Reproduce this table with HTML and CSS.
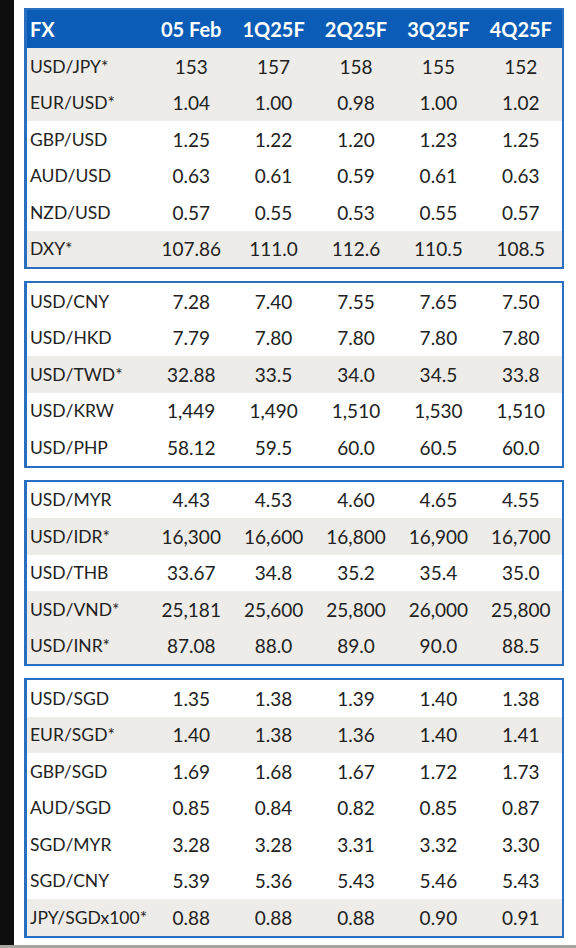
FILE: index.html
```html
<!DOCTYPE html>
<html lang="en">
<head>
<meta charset="utf-8">
<title>FX forecasts</title>
<link rel="stylesheet" href="styles.css">
</head>
<body>
<div class="screen">
  <div class="edge"></div>
  <main class="page">
    <section class="block">
      <div class="row head"><span class="pair">FX</span><span>05 Feb</span><span>1Q25F</span><span>2Q25F</span><span>3Q25F</span><span>4Q25F</span></div>
      <div class="row alt"><span class="pair">USD/JPY*</span><span>153</span><span>157</span><span>158</span><span>155</span><span>152</span></div>
      <div class="row alt"><span class="pair">EUR/USD*</span><span>1.04</span><span>1.00</span><span>0.98</span><span>1.00</span><span>1.02</span></div>
      <div class="row"><span class="pair">GBP/USD</span><span>1.25</span><span>1.22</span><span>1.20</span><span>1.23</span><span>1.25</span></div>
      <div class="row"><span class="pair">AUD/USD</span><span>0.63</span><span>0.61</span><span>0.59</span><span>0.61</span><span>0.63</span></div>
      <div class="row"><span class="pair">NZD/USD</span><span>0.57</span><span>0.55</span><span>0.53</span><span>0.55</span><span>0.57</span></div>
      <div class="row alt"><span class="pair">DXY*</span><span>107.86</span><span>111.0</span><span>112.6</span><span>110.5</span><span>108.5</span></div>
    </section>
    <section class="block">
      <div class="row"><span class="pair">USD/CNY</span><span>7.28</span><span>7.40</span><span>7.55</span><span>7.65</span><span>7.50</span></div>
      <div class="row"><span class="pair">USD/HKD</span><span>7.79</span><span>7.80</span><span>7.80</span><span>7.80</span><span>7.80</span></div>
      <div class="row alt"><span class="pair">USD/TWD*</span><span>32.88</span><span>33.5</span><span>34.0</span><span>34.5</span><span>33.8</span></div>
      <div class="row"><span class="pair">USD/KRW</span><span>1,449</span><span>1,490</span><span>1,510</span><span>1,530</span><span>1,510</span></div>
      <div class="row"><span class="pair">USD/PHP</span><span>58.12</span><span>59.5</span><span>60.0</span><span>60.5</span><span>60.0</span></div>
    </section>
    <section class="block">
      <div class="row"><span class="pair">USD/MYR</span><span>4.43</span><span>4.53</span><span>4.60</span><span>4.65</span><span>4.55</span></div>
      <div class="row alt"><span class="pair">USD/IDR*</span><span>16,300</span><span>16,600</span><span>16,800</span><span>16,900</span><span>16,700</span></div>
      <div class="row"><span class="pair">USD/THB</span><span>33.67</span><span>34.8</span><span>35.2</span><span>35.4</span><span>35.0</span></div>
      <div class="row alt"><span class="pair">USD/VND*</span><span>25,181</span><span>25,600</span><span>25,800</span><span>26,000</span><span>25,800</span></div>
      <div class="row alt"><span class="pair">USD/INR*</span><span>87.08</span><span>88.0</span><span>89.0</span><span>90.0</span><span>88.5</span></div>
    </section>
    <section class="block">
      <div class="row"><span class="pair">USD/SGD</span><span>1.35</span><span>1.38</span><span>1.39</span><span>1.40</span><span>1.38</span></div>
      <div class="row alt"><span class="pair">EUR/SGD*</span><span>1.40</span><span>1.38</span><span>1.36</span><span>1.40</span><span>1.41</span></div>
      <div class="row"><span class="pair">GBP/SGD</span><span>1.69</span><span>1.68</span><span>1.67</span><span>1.72</span><span>1.73</span></div>
      <div class="row"><span class="pair">AUD/SGD</span><span>0.85</span><span>0.84</span><span>0.82</span><span>0.85</span><span>0.87</span></div>
      <div class="row"><span class="pair">SGD/MYR</span><span>3.28</span><span>3.28</span><span>3.31</span><span>3.32</span><span>3.30</span></div>
      <div class="row"><span class="pair">SGD/CNY</span><span>5.39</span><span>5.36</span><span>5.43</span><span>5.46</span><span>5.43</span></div>
      <div class="row alt"><span class="pair">JPY/SGDx100*</span><span>0.88</span><span>0.88</span><span>0.88</span><span>0.90</span><span>0.91</span></div>
    </section>
  </main>
</div>
<div class="band"></div>
</body>
</html>
```
FILE: styles.css
```css
html, body {
  margin: 0;
  padding: 0;
  background: #ffffff;
  font-family: Lato, "Open Sans", "DejaVu Sans", sans-serif;
}

.screen {
  display: flex;
  height: 945px;
  overflow: hidden;
}

.edge {
  width: 14px;
  flex: none;
  background: #0e0e0e;
}

.page {
  padding: 8px 0 0 10px;
  width: 540px;
  display: flex;
  flex-direction: column;
  gap: 12px;
}

.block {
  border: 2px solid #2a6ec0;
  border-left-width: 3px;
}

.row {
  display: grid;
  grid-template-columns: 123px repeat(5, 1fr);
  align-items: center;
  height: 36.5px;
  font-size: 19px;
  color: #222222;
}

.row span {
  text-align: center;
  white-space: nowrap;
}

.row .pair {
  text-align: left;
  padding-left: 3px;
  font-size: 17.5px;
}

.alt {
  background: #eeece9;
}

.head {
  height: 38px;
  background: #0a5cb7;
  color: #ffffff;
  font-weight: 700;
  font-size: 20px;
}

.head .pair {
  font-size: 20px;
}

.band {
  height: 3px;
  background: #aaa49e;
}
```
